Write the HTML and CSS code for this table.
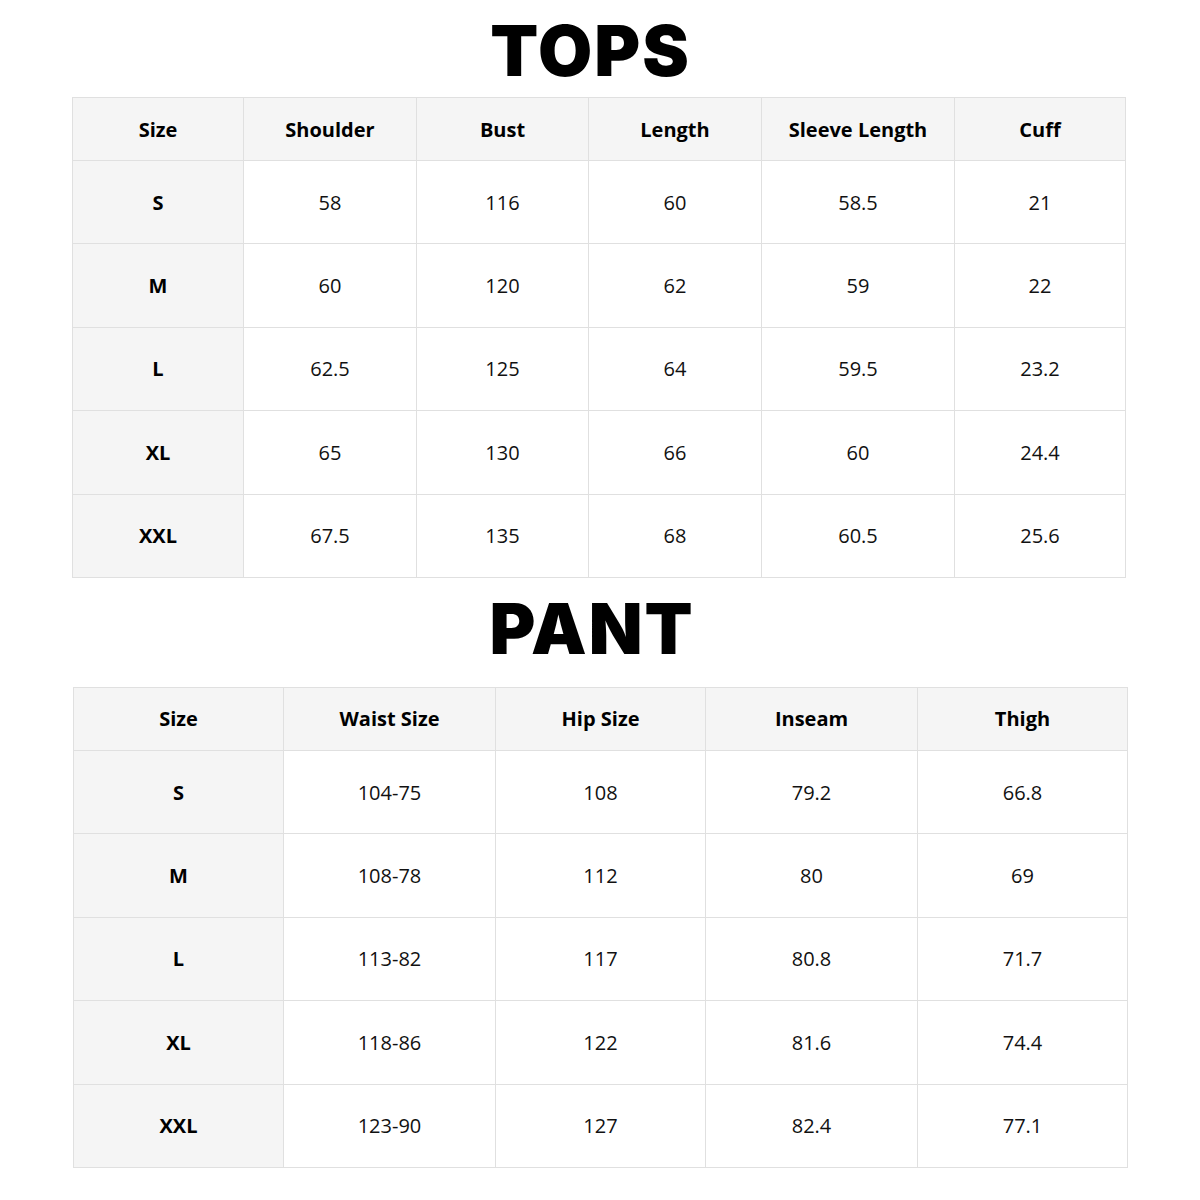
FILE: index.html
```html
<!DOCTYPE html>
<html>
<head>
<meta charset="utf-8">
<link rel="stylesheet" href="styles.css">
</head>
<body>
<section class="block block-tops">
  <h1 class="title">TOPS</h1>
  <table class="chart">
    <colgroup>
      <col style="width:171px"><col style="width:173px"><col style="width:172px"><col style="width:173px"><col style="width:193px"><col style="width:171px">
    </colgroup>
    <thead>
      <tr><th>Size</th><th>Shoulder</th><th>Bust</th><th>Length</th><th>Sleeve Length</th><th>Cuff</th></tr>
    </thead>
    <tbody>
      <tr><th>S</th><td>58</td><td>116</td><td>60</td><td>58.5</td><td>21</td></tr>
      <tr><th>M</th><td>60</td><td>120</td><td>62</td><td>59</td><td>22</td></tr>
      <tr><th>L</th><td>62.5</td><td>125</td><td>64</td><td>59.5</td><td>23.2</td></tr>
      <tr><th>XL</th><td>65</td><td>130</td><td>66</td><td>60</td><td>24.4</td></tr>
      <tr><th>XXL</th><td>67.5</td><td>135</td><td>68</td><td>60.5</td><td>25.6</td></tr>
    </tbody>
  </table>
</section>
<section class="block block-pant">
  <h1 class="title">PANT</h1>
  <table class="chart">
    <colgroup>
      <col style="width:210px"><col style="width:212px"><col style="width:210px"><col style="width:212px"><col style="width:210px">
    </colgroup>
    <thead>
      <tr><th>Size</th><th>Waist Size</th><th>Hip Size</th><th>Inseam</th><th>Thigh</th></tr>
    </thead>
    <tbody>
      <tr><th>S</th><td>104-75</td><td>108</td><td>79.2</td><td>66.8</td></tr>
      <tr><th>M</th><td>108-78</td><td>112</td><td>80</td><td>69</td></tr>
      <tr><th>L</th><td>113-82</td><td>117</td><td>80.8</td><td>71.7</td></tr>
      <tr><th>XL</th><td>118-86</td><td>122</td><td>81.6</td><td>74.4</td></tr>
      <tr><th>XXL</th><td>123-90</td><td>127</td><td>82.4</td><td>77.1</td></tr>
    </tbody>
  </table>
</section>
</body>
</html>
```

FILE: styles.css
```css
html, body {
  margin: 0;
  padding: 0;
  background: #ffffff;
}
body {
  width: 1200px;
  font-family: "Open Sans", "Noto Sans", sans-serif;
  color: #111111;
}
.block {
  display: flex;
  flex-direction: column;
}
.block-tops {
  padding-left: 72px;
  width: 1053px;
}
.block-pant {
  padding-left: 73px;
  width: 1054px;
}
.title {
  margin: 0;
  font-family: Inter, "Noto Sans", sans-serif;
  font-weight: 900;
  font-size: 70px;
  letter-spacing: 2px;
  color: #000000;
  text-align: center;
  display: flex;
  align-items: center;
  justify-content: center;
  padding-right: 16px;
  box-sizing: border-box;
}
.block-tops .title {
  height: 97px;
  padding-top: 4px;
}
.block-pant .title {
  height: 109px;
  padding-bottom: 8px;
}
.chart {
  border-collapse: collapse;
  table-layout: fixed;
  width: 100%;
}
.chart th,
.chart td {
  border: 1px solid #e0e0e0;
  text-align: center;
  vertical-align: middle;
  padding: 0;
  font-size: 20px;
}
.chart thead th {
  height: 62px;
  background: #f5f5f5;
  font-weight: 700;
  color: #000000;
}
.chart tbody th {
  background: #f5f5f5;
  font-weight: 700;
  color: #000000;
}
.chart tbody th,
.chart tbody td {
  height: 82.4px;
}
.chart tbody td {
  font-weight: 400;
  color: #111111;
}
```
